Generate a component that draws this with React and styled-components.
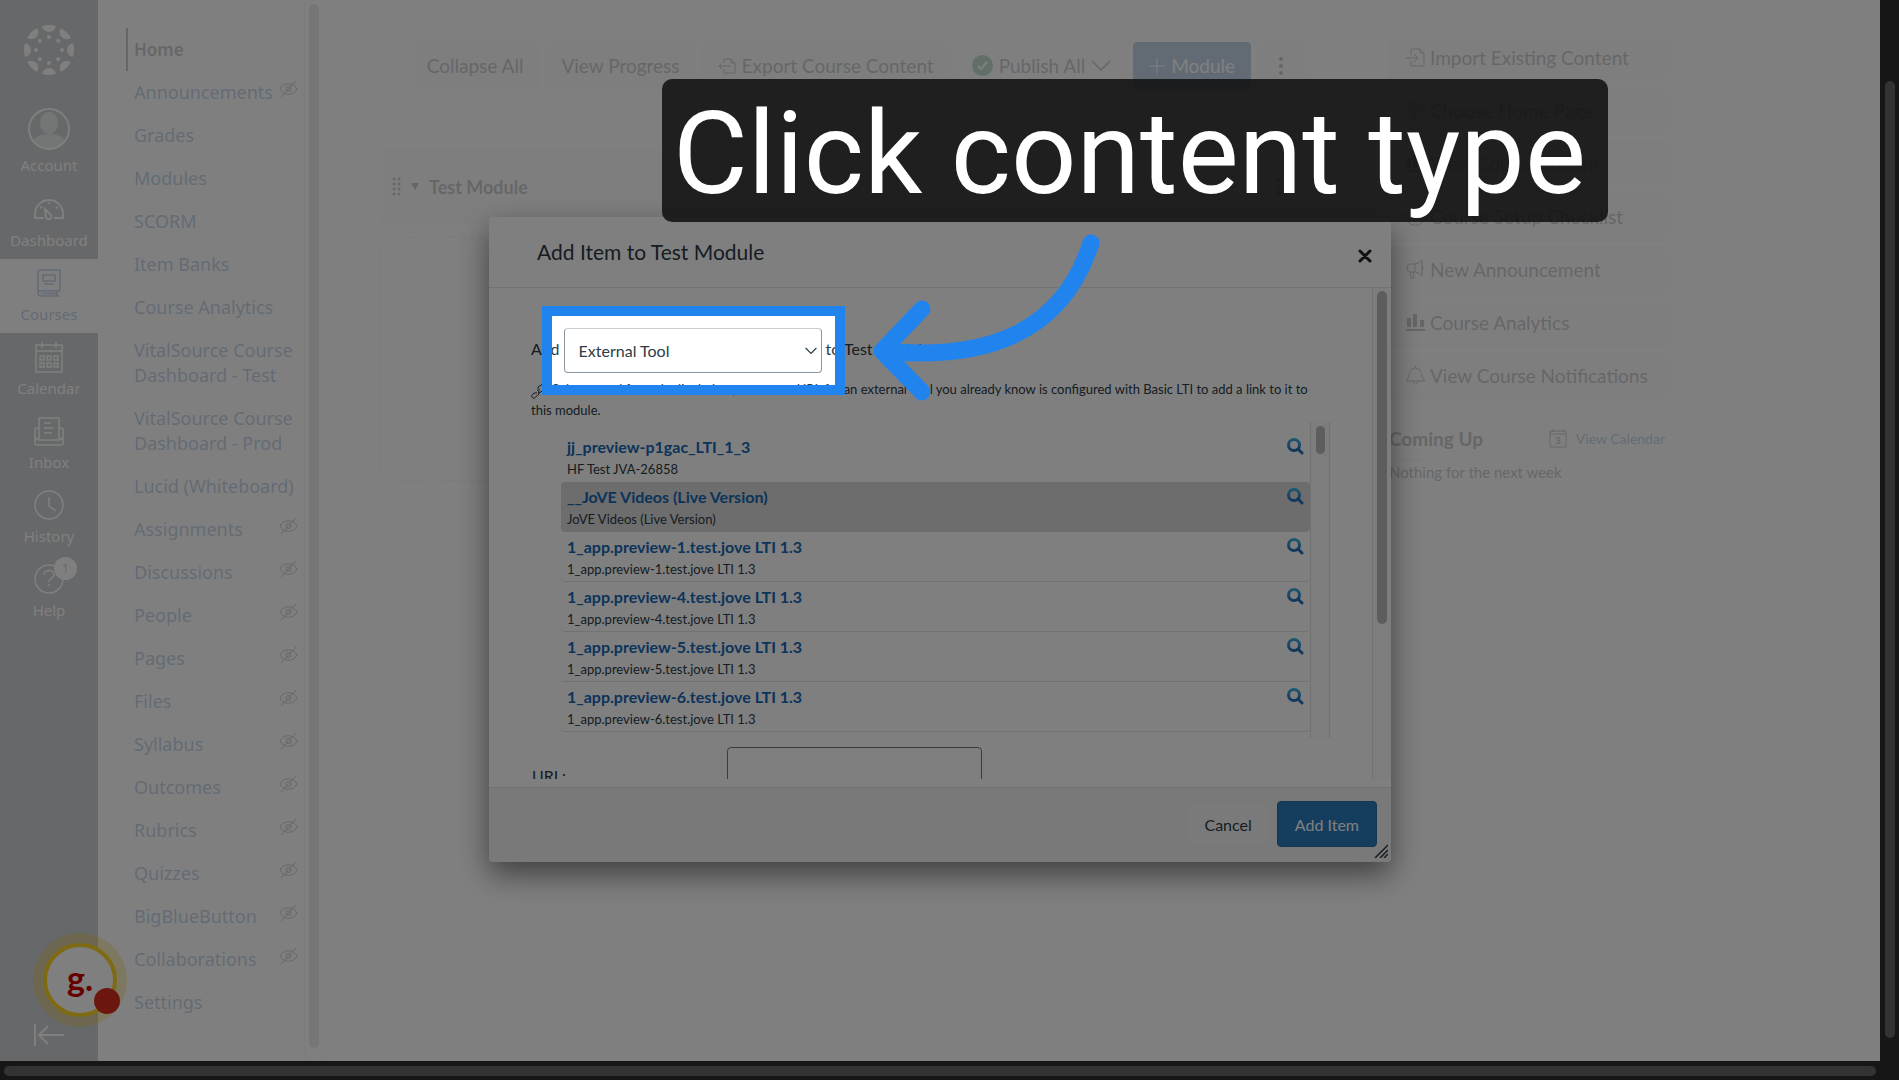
import React from 'react';
import styled, { createGlobalStyle } from 'styled-components';

const GlobalStyle = createGlobalStyle`
  *, *::before, *::after {
    box-sizing: border-box;
  }
  body {
    margin: 0;
    overflow: hidden;
    background: #fff;
    color: #2d3b45;
    font-family: Lato, "Liberation Sans", sans-serif;
    font-size: 19px;
  }
  a {
    color: #1560a8;
    text-decoration: none;
  }
  button, input, select {
    font-family: inherit;
    font-size: inherit;
    color: inherit;
  }
  ul {
    list-style: none;
    margin: 0;
    padding: 0;
  }
  svg {
    display: block;
    flex: none;
  }
`;

const Screen = styled.div`
  position: relative;
  display: grid;
  grid-template-columns: 1fr 19px;
  grid-template-rows: 1fr 19px;
  height: 100vh;
  overflow: hidden;
  background: #2c2c2c;
`;

const Viewport = styled.div`
  position: relative;
  min-height: 0;
  overflow: hidden;
  background: #fff;
`;

const Page = styled.div`
  display: flex;
  height: 100%;
`;

const ScrollTrack = styled.div`
  display: flex;
  flex: none;
  width: ${({ $width }) => $width || 'auto'};
  padding: ${({ $pad }) => $pad || '4px'};
  &::before {
    content: '';
    flex: 1;
    height: ${({ $thumb }) => $thumb || '100%'};
    border-radius: 5px;
    background: ${({ $color }) => $color || '#666'};
  }
`;

/* global navigation */

const GlobalNav = styled.nav`
  display: flex;
  flex-direction: column;
  flex: none;
  width: 98px;
  background: #3c464f;
  color: #fff;
  font-family: "Noto Sans", sans-serif;
  font-size: 15px;
  .logo {
    display: flex;
    justify-content: center;
    height: 91px;
    padding-top: 25px;
  }
  .collapse {
    display: flex;
    justify-content: center;
    margin-top: auto;
    padding: 0 0 15px;
    border: 0;
    background: none;
    color: #fff;
  }
`;

const GlobalLink = styled.a`
  position: relative;
  display: flex;
  flex-direction: column;
  align-items: center;
  height: ${({ $tall }) => ($tall ? 94 : 74)}px;
  padding-top: ${({ $tall }) => ($tall ? 17 : 8)}px;
  gap: 5px;
  line-height: 20px;
  background: ${({ $active }) => ($active ? '#fff' : 'transparent')};
  color: ${({ $active }) => ($active ? '#1560a8' : '#fff')};
`;

const CountBadge = styled.span`
  position: absolute;
  top: 2px;
  left: 54px;
  width: 23px;
  height: 23px;
  border-radius: 50%;
  background: #fff;
  color: #2d3b45;
  font-size: 12px;
  line-height: 23px;
  text-align: center;
`;

/* course navigation */

const CourseNav = styled.nav`
  display: flex;
  flex: none;
  width: 225px;
  ul {
    flex: 1;
    padding: 28px 0 0 28px;
  }
  .track {
    border-left: 1px solid #e4e4e4;
    border-right: 1px solid #e4e4e4;
  }
`;

const CourseLink = styled.a`
  display: flex;
  justify-content: space-between;
  padding: 9px 6px;
  border-left: 2px solid ${({ $active }) => ($active ? '#2d3b45' : 'transparent')};
  color: ${({ $active }) => ($active ? '#2d3b45' : '#1560a8')};
  font-family: "Noto Sans", sans-serif;
  font-size: ${({ $active }) => ($active ? 17 : 18)}px;
  font-weight: ${({ $active }) => ($active ? 600 : 400)};
  line-height: 25px;
  svg {
    margin-top: 1px;
    color: #2d3b45;
  }
`;

/* main area */

const Content = styled.div`
  display: flex;
  flex: 1;
  gap: 84px;
  min-width: 0;
  padding: 0 210px 0 56px;
`;

const ModulesColumn = styled.main`
  flex: 1;
  min-width: 0;
`;

const Toolbar = styled.div`
  display: flex;
  justify-content: flex-end;
  gap: 6px;
  padding-top: 42px;
`;

const PlainButton = styled.button`
  display: flex;
  align-items: center;
  gap: 6px;
  height: 47px;
  padding: 0 15px;
  border: 1px solid ${({ $primary }) => ($primary ? '#1560a8' : '#e9ebed')};
  border-radius: 4px;
  background: ${({ $primary, $white }) => {
    if ($primary) return '#1560a8';
    return $white ? '#fff' : '#f5f5f5';
  }};
  color: ${({ $primary }) => ($primary ? '#fff' : '#2d3b45')};
  white-space: nowrap;
`;

const ModuleHeader = styled.header`
  display: flex;
  align-items: center;
  gap: 10px;
  height: 75px;
  margin-top: 60px;
  padding: 0 17px 0 12px;
  border: 1px solid #f0f0f0;
  background: #f5f5f5;
  h2 {
    flex: 1;
    margin: 0;
    font-size: 18px;
    font-weight: 700;
  }
  .tools {
    display: flex;
    gap: 36px;
  }
`;

const DropZone = styled.div`
  height: 246px;
  margin-top: 12px;
  border: 2px dashed #e0e3e5;
  border-radius: 10px;
`;

const Sidebar = styled.aside`
  flex: none;
  width: 281px;
  padding-top: 35px;
  .actions {
    display: flex;
    flex-direction: column;
    gap: 6px;
  }
  .coming-up {
    display: flex;
    align-items: center;
    gap: 9px;
    height: 43px;
    margin-top: 17px;
    border-bottom: 1px solid #e0e3e5;
    font-size: 14px;
  }
  h2 {
    flex: 1;
    margin: 0;
    font-size: 19px;
    font-weight: 700;
  }
  .coming-up a {
    padding-right: 5px;
  }
  p {
    margin: 2px 0 0;
    font-size: 15px;
    line-height: 20px;
  }
`;

const SideButton = styled.a`
  display: flex;
  align-items: center;
  gap: 5px;
  height: 47px;
  padding: 0 16px 3px;
  border: 1px solid #eceeef;
  border-radius: 4px;
  background: #f5f5f5;
  color: #2d3b45;
`;

/* dialog */

const Veil = styled.div`
  position: absolute;
  inset: 0;
  display: flex;
  justify-content: center;
  align-items: flex-start;
  padding-top: 217px;
  background: rgba(255, 255, 255, .75);
`;

const Dialog = styled.section`
  position: relative;
  display: flex;
  flex-direction: column;
  width: 902px;
  height: 645px;
  border-radius: 4px;
  background: #fff;
  box-shadow: 0 12px 30px rgba(0, 0, 0, .5);
  > header {
    display: flex;
    align-items: center;
    justify-content: space-between;
    height: 71px;
    padding: 0 16px 2px 48px;
    border-bottom: 1px solid #e4e4e4;
  }
  h1 {
    margin: 0;
    font-size: 21px;
    font-weight: 400;
  }
  > footer {
    display: flex;
    justify-content: flex-end;
    gap: 7px;
    height: 75px;
    padding: 13px 14px;
    border-top: 1px solid #e4e4e4;
    border-radius: 0 0 4px 4px;
    background: #f2f2f2;
  }
`;

const CloseButton = styled.button`
  display: flex;
  margin-top: 10px;
  padding: 3px;
  border: 0;
  background: none;
  color: #222;
`;

const FooterButton = styled(PlainButton)`
  height: 46px;
  padding: 0 17px;
  background: ${({ $primary }) => ($primary ? '#2b7abc' : '#f5f5f5')};
  border-color: ${({ $primary }) => ($primary ? '#2b6ba0' : '#eceeef')};
  font-size: 16px;
`;

const ResizeGrip = styled.span`
  position: absolute;
  right: 3px;
  bottom: 4px;
`;

const DialogBody = styled.div`
  display: flex;
  flex: 1;
  min-height: 0;
  margin-bottom: 8px;
  overflow: hidden;
  .fields {
    flex: 1;
    min-width: 0;
    padding: 40px 42px 0;
  }
  .track {
    border-left: 1px solid #e4e4e4;
    background: #fafafa;
  }
`;

const TypeRow = styled.div`
  display: flex;
  align-items: center;
  gap: 4px;
  font-size: 16px;
  > label, > .target {
    padding-bottom: 4px;
  }
`;

const SelectBox = styled.span`
  position: relative;
  width: 258px;
  select {
    width: 100%;
    height: 45px;
    padding: 0 14px;
    border: 1px solid #8b969e;
    border-top-color: #c7cdd1;
    border-radius: 4px;
    background: #fff;
    appearance: none;
  }
  svg {
    position: absolute;
    top: 19px;
    right: 5px;
    pointer-events: none;
  }
`;

const Hint = styled.p`
  margin: 6px 0 1px;
  font-size: 13px;
  line-height: 21px;
  svg {
    display: inline-block;
    margin-right: 6px;
    vertical-align: -5px;
  }
`;

const ToolPanel = styled.div`
  display: flex;
  height: 316px;
  margin-left: 30px;
  overflow: hidden;
  ul {
    flex: 1;
    padding-top: 10px;
  }
  .track {
    border-left: 1px solid #e4e4e4;
    border-right: 1px solid #e4e4e4;
  }
`;

const ToolItem = styled.li`
  display: flex;
  justify-content: space-between;
  height: 50px;
  padding: 4px 6px 0;
  border-bottom: 1px solid ${({ $selected, $first }) => ($selected || $first ? 'transparent' : '#e4e4e4')};
  border-radius: 4px;
  background: ${({ $selected }) => ($selected ? '#dadada' : 'transparent')};
  .name {
    display: block;
    color: #1668b5;
    font-size: 16px;
    font-weight: 700;
    line-height: 22px;
  }
  .description {
    display: block;
    color: #2d3b45;
    font-size: 13px;
    line-height: 22px;
  }
  svg {
    margin-top: 1px;
  }
`;

const UrlRow = styled.div`
  display: grid;
  grid-template-columns: 196px 255px;
  align-items: start;
  margin-top: 9px;
  font-size: 16px;
  label {
    padding: 17px 0 0 1px;
    line-height: 24px;
  }
  input {
    height: 46px;
    border: 1px solid #76797c;
    border-radius: 4px;
    background: #fff;
  }
`;

/* floating layers */

const Assistant = styled.button`
  position: absolute;
  left: 43px;
  bottom: 44px;
  width: 74px;
  height: 74px;
  padding: 0 0 4px;
  border: 4px solid #ffd428;
  border-radius: 50%;
  background: #fff;
  box-shadow: 0 0 0 10px rgba(255, 204, 40, .28);
  color: #cc0000;
  font-size: 34px;
  font-weight: 700;
  line-height: 54px;
  &::after {
    content: '';
    position: absolute;
    right: -7px;
    bottom: -1px;
    width: 26px;
    height: 26px;
    border-radius: 50%;
    background: #d92c20;
  }
`;

const Spotlight = styled.div`
  position: absolute;
  top: 306px;
  left: 542px;
  width: 303px;
  height: 89px;
  border: 10px solid #2184ee;
  box-shadow: 0 0 0 3000px rgba(0, 0, 0, .5);
  pointer-events: none;
`;

const Callout = styled.div`
  position: absolute;
  top: 79px;
  left: 662px;
  width: 946px;
  height: 143px;
  padding: 0 11px;
  border-radius: 10px;
  background: rgba(15, 15, 15, .86);
  color: #fff;
  font-family: Roboto, "Liberation Sans", sans-serif;
  font-size: 115px;
  line-height: 150px;
  white-space: nowrap;
`;

const Arrow = styled.svg`
  position: absolute;
  top: 230px;
  left: 870px;
`;

const Glyph = ({
  w = 20, h = w, box = `0 0 ${w} ${h}`, sw = 1, children,
}) => (
  <svg
    width={w}
    height={h}
    viewBox={box}
    fill="none"
    stroke="currentColor"
    strokeWidth={sw}
    aria-hidden="true"
  >
    {children}
  </svg>
);

const spokes = [0, 45, 90, 135, 180, 225, 270, 315];

const LogoIcon = () => (
  <svg width="50" height="50" viewBox="-25 -25 50 50" fill="#fff" aria-label="Canvas">
    <clipPath id="logo-disc"><circle r="25" /></clipPath>
    <g clipPath="url(#logo-disc)">
      {spokes.map((deg) => <circle key={deg} r="7" cy="-25" transform={`rotate(${deg})`} />)}
    </g>
    {spokes.map((deg) => <circle key={deg} r="2" cy="-13" transform={`rotate(${deg})`} />)}
  </svg>
);

const AvatarIcon = () => (
  <svg width="42" height="42" viewBox="0 0 42 42" aria-hidden="true">
    <clipPath id="avatar-disc"><circle cx="21" cy="21" r="20" /></clipPath>
    <g clipPath="url(#avatar-disc)" fill="#a9adb1">
      <ellipse cx="21" cy="15" rx="9" ry="11" />
      <path d="M2 42 C3 30 10 27 17 26 L25 26 C32 27 39 30 40 42 Z" />
    </g>
    <circle cx="21" cy="21" r="20" fill="none" stroke="#fff" strokeWidth="2" />
  </svg>
);

const DashboardIcon = () => (
  <Glyph w={32} sw={2}>
    <path d="M11 25 H2 V21 A14 14 0 0 1 30 21 V25 H21" />
    <path d="M12 16 L18 22 C20 26 14 28 13 24 Z" />
    <path d="M16 9 V11 M7 14 L9 15 M25 14 L23 15" />
  </Glyph>
);

const CoursesIcon = () => (
  <Glyph w={32} sw={1.5}>
    <path d="M27 24 V3 H8 Q5 3 5 6 V26 Q5 29 8 29 H26 M27 24 H8 Q5 24 5 26 M24 24 V29 M8 26.500 H24" />
    <path d="M10 8 H22 V14 H10 Z M11 17 H21" />
  </Glyph>
);

const CalendarIcon = () => (
  <Glyph w={32} sw={1.5}>
    <path d="M3 4 H29 V31 H3 Z M3 10 H29 M9 1 V7 M23 1 V7" />
    <path d="M7 15 H11 V19 H7 Z M14 15 H18 V19 H14 Z M21 15 H25 V19 H21 Z M7 22 H11 V26 H7 Z M14 22 H18 V26 H14 Z M21 22 H25 V26 H21 Z" />
  </Glyph>
);

const InboxIcon = () => (
  <Glyph w={32} sw={1.5}>
    <path d="M6 24 V3 H26 V24 M11 8 H18 M11 13 H21 M11 18 H19" />
    <path d="M6 13 H4 Q2 13 2 15 V28 Q2 30 4 30 H28 Q30 30 30 28 V15 Q30 13 28 13 H26 M2 21 Q3 25 6 25 H26 Q29 25 30 21" />
  </Glyph>
);

const HistoryIcon = () => (
  <Glyph w={32} sw={1.5}>
    <circle cx="16" cy="16" r="14" />
    <path d="M16 8 V17 L23 22" />
  </Glyph>
);

const HelpIcon = () => (
  <Glyph w={32} sw={1.5}>
    <circle cx="16" cy="16" r="14" />
    <path d="M11 12 C11 6 21 6 21 12 C21 15 16 15 16 19 M16 21 V23" />
  </Glyph>
);

const HiddenIcon = () => (
  <Glyph w={19} h={17}>
    <path d="M1 8 C4 1 15 1 18 8 C15 15 4 15 1 8 Z M2 16 L17 0" />
    <circle cx="9.500" cy="8" r="2.500" />
  </Glyph>
);

const ExportIcon = () => (
  <Glyph w={18} h={16}>
    <path d="M6 5 V1 H13 L17 5 V15 H6 V11 M13 1 V5 H17 M12 8 H1 M4 5 L1 8 L4 11" />
  </Glyph>
);

const ImportIcon = () => (
  <Glyph w={19} h={19}>
    <path d="M5 7 V1 H14 L18 5 V18 H5 V13 M14 1 V5 H18 M0 10 H11 M8 6 L12 10 L8 14" />
  </Glyph>
);

const TargetIcon = () => (
  <Glyph w={19}>
    <circle cx="9.500" cy="9.500" r="8" />
    <circle cx="9.500" cy="9.500" r="4" />
    <path d="M9.500 0 V5 M9.500 14 V19 M0 9.500 H5 M14 9.500 H19" />
  </Glyph>
);

const ChartIcon = () => (
  <Glyph w={19} sw={0}>
    <path fill="currentColor" d="M1 5 H5 V14 H1 Z M7 1 H11 V14 H7 Z M14 7 H18 V14 H14 Z M0 16 H19 V18 H0 Z" />
  </Glyph>
);

const ChecklistIcon = () => (
  <Glyph w={19}>
    <circle cx="9.500" cy="9.500" r="9" />
    <path d="M5 10 L9 13 L14 6" />
  </Glyph>
);

const AnnounceIcon = () => (
  <Glyph w={19}>
    <path d="M9 4 H4 Q1 4 1 8 Q1 12 4 12 H9 Q13 12 16 16 V0 Q13 4 9 4 Z M9 4 V12 M16 6 Q19 8 16 10 M4 12 L5 18 H8 L7 12" />
  </Glyph>
);

const BellIcon = () => (
  <Glyph w={19}>
    <path d="M0 15 C4 13 2 2 9.500 2 C17 2 15 13 19 15 Z M7 15 C7 19 12 19 12 15 M9.500 0 V2" />
  </Glyph>
);

const DayIcon = () => (
  <svg width="18" height="19" viewBox="0 0 18 19" fill="none" stroke="#2d3b45" aria-hidden="true">
    <path d="M1 2 H17 V18 H1 Z M1 5 H17 M4 0 V3 M14 0 V3" />
    <text x="6" y="15" fontSize="10" fontWeight="700" fill="#2d3b45" stroke="none">3</text>
  </svg>
);

const KebabIcon = () => (
  <svg width="16" height="18" viewBox="0 0 16 18" fill="#2d3b45" aria-hidden="true">
    <circle cx="8" cy="2" r="2" />
    <circle cx="8" cy="9" r="2" />
    <circle cx="8" cy="16" r="2" />
  </svg>
);

const PlusIcon = () => (
  <Glyph w={16}><path d="M8 0 V16 M0 8 H16" /></Glyph>
);

const Chevron = ({ w = 20 }) => (
  <Glyph w={w} h={w / 2 + 2} box="0 0 20 12"><path d="M1 1 L10 10 L19 1" strokeWidth={w < 20 ? 2 : 1.5} /></Glyph>
);

const SearchIcon = () => (
  <svg width="18" height="18" viewBox="0 0 18 18" fill="none" aria-hidden="true">
    <linearGradient id="lens" x1="0" y1="0" x2="0" y2="1">
      <stop offset="0" stopColor="#3aaee0" />
      <stop offset="1" stopColor="#2570b8" />
    </linearGradient>
    <circle cx="8" cy="8" r="5.500" stroke="url(#lens)" strokeWidth="3" />
    <path d="M12 12 L16 16" stroke="#2570b8" strokeWidth="3" strokeLinecap="round" />
  </svg>
);

const globalLinks = [
  { label: 'Account', Icon: AvatarIcon, tall: true },
  { label: 'Dashboard', Icon: DashboardIcon },
  { label: 'Courses', Icon: CoursesIcon, active: true },
  { label: 'Calendar', Icon: CalendarIcon },
  { label: 'Inbox', Icon: InboxIcon },
  { label: 'History', Icon: HistoryIcon },
  { label: 'Help', Icon: HelpIcon, count: 1 },
];

const courseLinks = [
  { label: 'Home', active: true },
  { label: 'Announcements', hidden: true },
  { label: 'Grades' },
  { label: 'Modules' },
  { label: 'SCORM' },
  { label: 'Item Banks' },
  { label: 'Course Analytics' },
  { label: 'VitalSource Course Dashboard - Test' },
  { label: 'VitalSource Course Dashboard - Prod' },
  { label: 'Lucid (Whiteboard)' },
  { label: 'Assignments', hidden: true },
  { label: 'Discussions', hidden: true },
  { label: 'People', hidden: true },
  { label: 'Pages', hidden: true },
  { label: 'Files', hidden: true },
  { label: 'Syllabus', hidden: true },
  { label: 'Outcomes', hidden: true },
  { label: 'Rubrics', hidden: true },
  { label: 'Quizzes', hidden: true },
  { label: 'BigBlueButton', hidden: true },
  { label: 'Collaborations', hidden: true },
  { label: 'Settings' },
];

const sideActions = [
  { label: 'Import Existing Content', Icon: ImportIcon },
  { label: 'Choose Home Page', Icon: TargetIcon },
  { label: 'View Course Stream', Icon: ChartIcon },
  { label: 'Course Setup Checklist', Icon: ChecklistIcon },
  { label: 'New Announcement', Icon: AnnounceIcon },
  { label: 'Course Analytics', Icon: ChartIcon },
  { label: 'View Course Notifications', Icon: BellIcon },
];

const tools = [
  { name: 'jj_preview-p1gac_LTI_1_3', description: 'HF Test JVA-26858' },
  { name: '__JoVE Videos (Live Version)', description: 'JoVE Videos (Live Version)', selected: true },
  { name: '1_app.preview-1.test.jove LTI 1.3', description: '1_app.preview-1.test.jove LTI 1.3' },
  { name: '1_app.preview-4.test.jove LTI 1.3', description: '1_app.preview-4.test.jove LTI 1.3' },
  { name: '1_app.preview-5.test.jove LTI 1.3', description: '1_app.preview-5.test.jove LTI 1.3' },
  { name: '1_app.preview-6.test.jove LTI 1.3', description: '1_app.preview-6.test.jove LTI 1.3' },
  { name: '', description: '' },
];

const GlobalNavView = () => (
  <GlobalNav aria-label="Global navigation">
    <a className="logo" href="#home" aria-label="Canvas home"><LogoIcon /></a>
    {globalLinks.map(({
      label, Icon, tall, active, count,
    }) => (
      <GlobalLink key={label} href={`#${label}`} $tall={tall} $active={active}>
        <Icon />
        <span>{label}</span>
        {count && <CountBadge>{count}</CountBadge>}
      </GlobalLink>
    ))}
    <button type="button" className="collapse" aria-label="Minimize navigation">
      <Glyph w={30} h={22} sw={2}>
        <path d="M1 0 V22 M30 11 H5 M14 2 L5 11 L14 20" />
      </Glyph>
    </button>
  </GlobalNav>
);

const CourseNavView = () => (
  <CourseNav aria-label="Course navigation">
    <ul>
      {courseLinks.map(({ label, active, hidden }) => (
        <li key={label}>
          <CourseLink href={`#${label}`} $active={active}>
            <span>{label}</span>
            {hidden && <HiddenIcon />}
          </CourseLink>
        </li>
      ))}
    </ul>
    <ScrollTrack className="track" $width="19px" $pad="4px 3px 13px 4px" $color="#b8b8b8" />
  </CourseNav>
);

const ModulesView = () => (
  <ModulesColumn>
    <Toolbar>
      <PlainButton type="button">Collapse All</PlainButton>
      <PlainButton type="button">View Progress</PlainButton>
      <PlainButton type="button">
        <ExportIcon />
        Export Course Content
      </PlainButton>
      <PlainButton type="button" $white>
        <svg width="21" height="21" viewBox="0 0 21 21" aria-hidden="true">
          <circle cx="10.500" cy="10.500" r="10.500" fill="#0b874b" />
          <path d="M6 11 L9 14 L15 7" fill="none" stroke="#fff" strokeWidth="2" />
        </svg>
        Publish All
        <Chevron />
      </PlainButton>
      <PlainButton type="button" $primary>
        <PlusIcon />
        Module
      </PlainButton>
      <PlainButton type="button" aria-label="More options">
        <KebabIcon />
      </PlainButton>
    </Toolbar>
    <ModuleHeader>
      <svg width="9" height="20" viewBox="0 0 9 20" fill="#2d3b45" aria-hidden="true">
        {[2, 7, 12, 17].map((y) => (
          <g key={y}>
            <circle cx="2" cy={y} r="1.500" />
            <circle cx="7" cy={y} r="1.500" />
          </g>
        ))}
      </svg>
      <svg width="8" height="7" viewBox="0 0 8 7" fill="#2d3b45" aria-hidden="true"><path d="M0 0 H8 L4 7 Z" /></svg>
      <h2>Test Module</h2>
      <span className="tools">
        <Glyph w={18}>
          <circle cx="9" cy="9" r="8" />
          <path d="M3 3 L15 15" />
        </Glyph>
        <PlusIcon />
        <KebabIcon />
      </span>
    </ModuleHeader>
    <DropZone />
  </ModulesColumn>
);

const SidebarView = () => (
  <Sidebar>
    <div className="actions">
      {sideActions.map(({ label, Icon }) => (
        <SideButton key={label} href={`#${label}`}>
          <Icon />
          {label}
        </SideButton>
      ))}
    </div>
    <div className="coming-up">
      <h2>Coming Up</h2>
      <DayIcon />
      <a href="#calendar">View Calendar</a>
    </div>
    <p>Nothing for the next week</p>
  </Sidebar>
);

const AddItemDialog = () => (
  <Dialog role="dialog" aria-labelledby="dialog-title">
    <header>
      <h1 id="dialog-title">Add Item to Test Module</h1>
      <CloseButton type="button" aria-label="Close">
        <Glyph w={14} sw={3}><path d="M2 2 L12 12 M12 2 L2 12" strokeLinecap="round" /></Glyph>
      </CloseButton>
    </header>
    <DialogBody>
      <div className="fields">
        <TypeRow>
          <label htmlFor="item-type">Add</label>
          <SelectBox>
            <select id="item-type" defaultValue="tool">
              <option value="tool">External Tool</option>
            </select>
            <Chevron w={12} />
          </SelectBox>
          <span className="target">to Test Module</span>
        </TypeRow>
        <Hint>
          <Glyph w={15}>
            <path d="M6 9 L3 9 L0.500 12 Q1 14 3 14.500 L8 10 Q9 7 6 6 M9 6 Q6 5 7 3 L11 0.500 Q14 1 14 4 L10 8 Q8 9 7 8" />
          </Glyph>
          Select a tool from the list below, or enter a URL for an external tool you already know is
          configured with Basic LTI to add a link to it to this module.
        </Hint>
        <ToolPanel>
          <ul>
            {tools.map(({ name, description, selected }, index) => (
              <ToolItem key={name} $selected={selected} $first={index === 0}>
                <a href="#tool">
                  <span className="name">{name}</span>
                  <span className="description">{description}</span>
                </a>
                <SearchIcon />
              </ToolItem>
            ))}
          </ul>
          <ScrollTrack className="track" $width="20px" $pad="4px 4px 4px 5px" $thumb="28px" $color="#bbb" />
        </ToolPanel>
        <UrlRow>
          <label htmlFor="tool-url">URL:</label>
          <input id="tool-url" type="text" />
        </UrlRow>
      </div>
      <ScrollTrack className="track" $width="19px" $pad="3px 4px" $thumb="333px" $color="#bbb" />
    </DialogBody>
    <footer>
      <FooterButton type="button">Cancel</FooterButton>
      <FooterButton type="button" $primary>Add Item</FooterButton>
    </footer>
    <ResizeGrip>
      <Glyph w={14} sw={1.5}><path d="M1 14 L14 1 M6 14 L14 6 M10 14 L14 10" /></Glyph>
    </ResizeGrip>
  </Dialog>
);

const App = () => (
  <>
    <GlobalStyle />
    <Screen>
      <Viewport>
        <Page>
          <GlobalNavView />
          <CourseNavView />
          <Content>
            <ModulesView />
            <SidebarView />
          </Content>
        </Page>
        <Veil>
          <AddItemDialog />
        </Veil>
        <Assistant type="button">g.</Assistant>
      </Viewport>
      <ScrollTrack $pad="81px 4px 0 5px" $thumb="957px" />
      <ScrollTrack $pad="5px 4px 4px" />
      <Spotlight />
      <Arrow width="240" height="180" viewBox="870 230 240 180" fill="none" stroke="#2184ee" strokeWidth="17" strokeLinecap="round" strokeLinejoin="round" aria-hidden="true">
        <path d="M1091 243 C1062 334 985 361 882 351 M922 309 L882 351 L922 392" />
      </Arrow>
      <Callout>Click content type</Callout>
    </Screen>
  </>
);

export default App;
